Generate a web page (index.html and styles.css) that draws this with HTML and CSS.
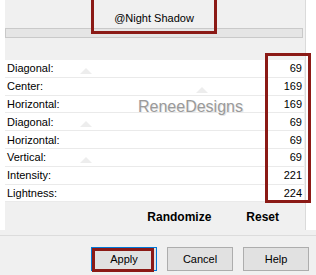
FILE: index.html
```html
<!DOCTYPE html>
<html lang="en">
<head>
    <meta charset="UTF-8">
    <title>Night Shadow</title>
    <link rel="stylesheet" href="styles.css">
</head>
<body>

<div class="dialog">
    <!-- Preset panel -->
    <div class="frame">
        <div class="panel">
            <div class="preset-area"></div>
            <div class="track"></div>

            <div class="rows">
                <div class="row"><span>Diagonal:</span><span class="val">69</span></div>
                <div class="row"><span>Center:</span><span class="val">169</span></div>
                <div class="row"><span>Horizontal:</span><span class="val">169</span></div>
                <div class="row"><span>Diagonal:</span><span class="val">69</span></div>
                <div class="row"><span>Horizontal:</span><span class="val">69</span></div>
                <div class="row"><span>Vertical:</span><span class="val">69</span></div>
                <div class="row"><span>Intensity:</span><span class="val">221</span></div>
                <div class="row"><span>Lightness:</span><span class="val">224</span></div>
            </div>

            <div class="actions">
                <span>Randomize</span>
                <span>Reset</span>
            </div>
        </div>
    </div>

    <!-- Dialog buttons -->
    <div class="buttons">
        <div class="btn apply">Apply<span class="mark"></span></div>
        <div class="btn">Cancel</div>
        <div class="btn">Help</div>
    </div>

    <!-- Annotations over the content -->
    <div class="preset-box">@Night Shadow</div>
    <div class="values-box"></div>
    <div class="watermark">ReneeDesigns</div>
    <span class="thumb t1"></span>
    <span class="thumb t2"></span>
    <span class="thumb t3"></span>
    <span class="thumb t4"></span>
</div>

</body>
</html>
```

FILE: styles.css
```css
body {
    margin: 0;
    font-family: 'Liberation Sans', Arial, sans-serif;
    font-size: 11px;
    color: #000;
    background-color: #f0f0f0;
}

.dialog {
    position: relative;
    width: 316px;
    height: 275px;
    overflow: hidden;
}

/* Top frame with the white edges */
.frame {
    display: flex;
    height: 230px;
    padding: 0 10px 0 5px;
    background-color: #fff;
}

.panel {
    flex: 1;
    display: flex;
    flex-direction: column;
    background-color: #f0f0f0;
    border-right: 1px solid #dadada;
}

.preset-area {
    height: 28px;
}

.track {
    height: 8px;
    margin-right: 2px;
    border: 1px solid #c9c9c9;
    background-color: #e5e5e5;
}

.rows {
    margin-top: 22px;
    margin-right: 1px;
}

.row {
    display: flex;
    justify-content: space-between;
    align-items: center;
    height: 16.8px;
    padding: 0 2px 0 2px;
    background-color: #fff;
    border-bottom: 1px solid #eaeaea;
}

.actions {
    display: flex;
    justify-content: flex-end;
    gap: 35px;
    padding: 8px 26px 0 0;
    font-size: 12px;
    font-weight: bold;
}

/* Bottom buttons */
.buttons {
    display: flex;
    justify-content: flex-end;
    gap: 10px;
    margin-top: 5px;
    padding: 11px 7px 0 0;
    border-top: 1px solid #dcdcdc;
}

.btn {
    position: relative;
    width: 64px;
    height: 22px;
    line-height: 22px;
    text-align: center;
    background-color: #e1e1e1;
    border: 1px solid #adadad;
}

.btn.apply {
    border-color: #0078d7;
}

.btn .mark {
    position: absolute;
    left: 0;
    top: 0;
    width: 56px;
    height: 18px;
    border: 3px solid #8b1a16;
}

/* Red annotation boxes */
.preset-box {
    position: absolute;
    left: 91px;
    top: -4px;
    width: 120px;
    height: 32px;
    line-height: 38px;
    text-align: center;
    border: 3px solid #8b1a16;
}

.values-box {
    position: absolute;
    left: 265px;
    top: 53px;
    width: 40px;
    height: 144px;
    border: 3px solid #8b1a16;
}

.watermark {
    position: absolute;
    left: 138px;
    top: 98px;
    font-size: 16px;
    line-height: 18px;
    color: #9a9a9a;
    text-shadow: 1px 1px 0 #e6e6e6, -1px 0 0 #fff;
}

/* faint slider thumbs */
.thumb {
    position: absolute;
    width: 0;
    height: 0;
    border-left: 6px solid transparent;
    border-right: 6px solid transparent;
    border-bottom: 6px solid #ededed;
}

.t1 { left: 80px; top: 68px; }
.t2 { left: 196px; top: 87px; }
.t3 { left: 80px; top: 121px; }
.t4 { left: 80px; top: 157px; }
```
